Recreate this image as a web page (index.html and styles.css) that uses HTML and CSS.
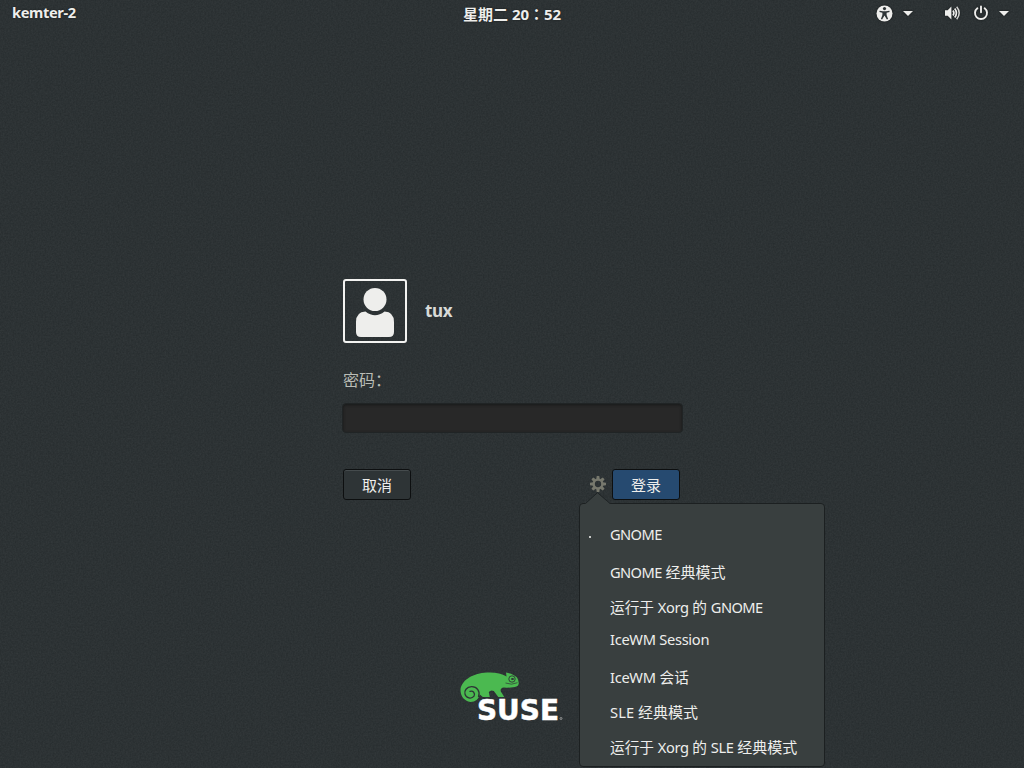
FILE: index.html
```
<!DOCTYPE html>
<html lang="zh-CN">
<head>
<meta charset="utf-8">
<title>登录</title>
<link rel="stylesheet" href="styles.css">
</head>
<body>
<svg class="grain" width="1024" height="768" aria-hidden="true">
  <filter id="noise" x="0" y="0" width="100%" height="100%" color-interpolation-filters="sRGB"><feTurbulence type="fractalNoise" baseFrequency="0.6" numOctaves="3" seed="4"/><feColorMatrix values="1 0 0 0 0  1 0 0 0 0  1 0 0 0 0  0 0 0 0 1"/></filter>
  <rect width="1024" height="768" filter="url(#noise)"/>
</svg>
<div class="screen">
  <header class="panel">
    <span class="host">kemter-2</span>
    <span class="clock">星期二<span class="time">20</span><span class="colon">：</span><span class="minutes">52</span></span>
    <div class="tray">
      <svg class="access" width="17" height="17" viewBox="0 0 17 17"><circle cx="8.5" cy="8.5" r="8" fill="#eeeeec"/><circle cx="8.5" cy="3.6" r="1.6" fill="#2e3436"/><path d="M3.6 5.8 7 6.3h3l3.4-.5.2 1.1-3 .8v2.4l1.5 4-1.2.5-2.4-4.1-2.4 4.1-1.2-.5 1.5-4V7.7l-3-.8Z" fill="#2e3436"/></svg>
      <svg class="arrow first" width="10" height="5" viewBox="0 0 10 5"><path d="M0 0h10L5 5Z"/></svg>
      <svg class="sound" width="17" height="16" viewBox="0 0 17 16"><path d="M1 5.200h2.700L7.400 1.500v13L3.700 10.800H1Z" fill="#eeeeec"/><g fill="none" stroke="#eeeeec"><path d="M9 5.500q1.800 2.500 0 5" stroke-width="1.700"/><path d="M10.700 3.500q3.400 4.500 0 9" stroke-width="1.700"/><path d="M12.700 1.700q5 6.300 0 12.600" stroke-width="1.500" opacity=".85"/></g></svg>
      <svg class="power" width="16" height="16" viewBox="0 0 16 16" fill="none" stroke="#eeeeec" stroke-width="1.9" stroke-linecap="round"><path d="M4.4 3.2a6 6 0 1 0 7.2 0M8 1.5v5.7"/></svg>
      <svg class="arrow last" width="10" height="5" viewBox="0 0 10 5"><path d="M0 0h10L5 5Z"/></svg>
    </div>
  </header>
  <main class="login">
    <div class="user">
      <div class="avatar"><svg width="60" height="60" viewBox="0 0 60 60" fill="#eeeeec"><circle cx="30" cy="18.5" r="11.5"/><path d="M20.500 30.500q9.500 7.500 19 0Q49 31 49 41v10q0 5-5 5H16q-5 0-5-5V41q0-10 9.500-10.500Z"/></svg></div>
      <span class="name">tux</span>
    </div>
    <label class="prompt" for="pw">密码：</label>
    <input class="entry" id="pw" type="password">
    <div class="actions">
      <button class="button cancel">取消</button>
      <div class="session">
        <svg class="gear" width="18" height="18" viewBox="-9 -9 18 18"><g fill="#77786d"><path id="tooth" d="M-1.300-8h2.600l.5 3.500h-3.600Z"/><use href="#tooth" transform="rotate(45)"/><use href="#tooth" transform="rotate(90)"/><use href="#tooth" transform="rotate(135)"/><use href="#tooth" transform="rotate(180)"/><use href="#tooth" transform="rotate(225)"/><use href="#tooth" transform="rotate(270)"/><use href="#tooth" transform="rotate(315)"/></g><circle r="4.300" fill="none" stroke="#77786d" stroke-width="2.300"/></svg>
        <button class="button submit">登录</button>
        <div class="menu">
          <svg class="pointer" width="26" height="12" viewBox="0 0 26 12"><path d="M0 12 12.500.7 25.500 12Z" fill="#393f3f"/><path d="M.5 11.500 12.500.7 25 11.500" fill="none" stroke="#1f2425"/></svg>
          <div class="item latin"><span class="dot"></span><span class="w0">GNOME</span></div>
          <div class="item"><span class="w0">GNOME</span> <span class="han">经典模式</span></div>
          <div class="item">运行于 <span class="w1">Xorg</span> 的 <span class="w0">GNOME</span></div>
          <div class="item latin"><span class="w2">IceWM Session</span></div>
          <div class="item"><span class="w2">IceWM</span> 会话</div>
          <div class="item"><span class="sle">SLE</span> <span class="han">经典模式</span></div>
          <div class="item">运行于 <span class="w1">Xorg</span> 的 <span class="w1">SLE</span> <span class="han">经典模式</span></div>
        </div>
      </div>
    </div>
  </main>
  <svg class="logo" width="104" height="60" viewBox="0 0 104 60">
    <path d="M10.500 30C4 29 .5 24 .5 18 1 9 12 2 24 .8 33-.2 41 1 46.500 4.500L46 .5q8 1.500 11 5 1.500 2 1.800 6-.5 3-4 3.500-7 1-11 .5-4 .5-3 4l3.500 5.500h-6l-4.500-6q-3-1.500-5 1l1 5h-7l-3-2.500q-2 7.500-9.300 7.500Z" fill="#4bb950"/>
    <path d="M18.500 24.500c2-5-1.500-10-7-9.800-5 .3-7.500 4-6.500 7.500 1 4 6.500 5.300 9 2 1.500-3-1-6-4-4.800" fill="none" stroke="#2e3436" stroke-width="1.300" stroke-linecap="round"/>
    <path d="M45.500 11q6 2.500 12-.3" fill="none" stroke="#2e3436" stroke-width=".7"/>
    <circle cx="52" cy="7" r="3.200" fill="none" stroke="#2e3436" stroke-width=".9"/><ellipse cx="52.500" cy="7" rx="1.500" ry="1" fill="#2e3436"/>
    <text class="wordmark" x="17" y="47.500" textLength="82" lengthAdjust="spacingAndGlyphs">SUSE</text>
    <circle cx="101" cy="46.500" r="1" fill="none" stroke="#ccc" stroke-width=".6"/>
  </svg>
</div>
</body>
</html>
```
FILE: styles.css
```
* { box-sizing: border-box; }
body { margin: 0; width: 1024px; height: 768px; overflow: hidden; background: #282e30; color: #eeeeec; font: 14.67px/20px "Noto Sans", "Noto Sans CJK SC", sans-serif; }
.grain { position: absolute; inset: 0; opacity: .055; }
.screen { position: relative; width: 1024px; height: 768px; display: flex; flex-direction: column; }
.panel { display: grid; grid-template-columns: 1fr auto 1fr; height: 27px; font-weight: 700; text-shadow: 0 0 2px #0008; }
.host { padding: 2px 0 0 12px; font-size: 14.67px; letter-spacing: -.4px; }
.clock { display: flex; padding-top: 4px; font-size: 15px; }
.time { padding-left: 4px; letter-spacing: -.1px; }
.colon { font-family: "Noto Sans CJK TC", sans-serif; }
.minutes { letter-spacing: -.1px; }
.tray { display: flex; justify-content: flex-end; padding-right: 15px; }
.tray svg { filter: drop-shadow(0 0 1px #0008); }
.access { margin: 5px 10px 0 0; }
.arrow { fill: #eeeeec; margin-top: 11px; }
.first { margin-right: 31px; }
.sound { margin: 5px 12px 0 0; }
.power { margin: 5px 10px 0 0; }
.login { width: 341px; margin: 252px 0 0 342px; height: 221px; }
.user { display: flex; align-items: center; height: 64px; padding-left: 1px; gap: 18px; }
.avatar { width: 64px; height: 64px; border: 2px solid #f3f3f1; border-radius: 3px; }
.avatar svg { display: block; }
.name { font-size: 17px; font-weight: 700; color: #d8dad7; letter-spacing: -.4px; }
.prompt { display: block; margin: 27px 0 0 1px; height: 20px; font-size: 16px; color: #babdb6; }
.entry { display: block; width: 341px; height: 30px; margin-top: 13px; padding: 4px; border: 1px solid #202425; border-radius: 4px; background: #282828; box-shadow: inset 0 1px 3px #171919; outline: none; }
.actions { display: flex; justify-content: space-between; margin-top: 36px; padding: 0 3px 0 1px; }
.button { width: 68px; height: 31px; padding: 0; border: 1px solid #0d0f10; border-radius: 3px; color: #eeeeec; font: inherit; font-size: 15px; background: #2e3436; box-shadow: inset 0 1px #454b4d; }
.submit { background: #264a70; box-shadow: none; }
.session { position: relative; display: flex; gap: 5px; }
.gear { margin-top: 6px; }
.menu { position: absolute; left: -10px; top: 34px; width: 246px; height: 264px; padding-top: 16px; border: 1px solid #1c2021; border-radius: 4px; background: #393f3f; }
.pointer { position: absolute; left: 5px; top: -12px; }
.item { position: relative; height: 35px; padding-left: 30px; line-height: 35px; white-space: nowrap; }
.latin { line-height: 29px; }
.dot { position: absolute; left: 9px; top: 16px; width: 2px; height: 2px; background: #c8cac8; }
.han { font-size: 15px; }
.w0 { letter-spacing: -.6px; }
.w1 { letter-spacing: -.4px; }
.w2 { letter-spacing: -.3px; }
.sle { letter-spacing: .1px; }
.logo { display: block; margin: 172px 0 0 460px; }
.wordmark { font: bold 29px "DejaVu Sans", sans-serif; fill: #fff; stroke: #fff; stroke-width: .5px; }
```
